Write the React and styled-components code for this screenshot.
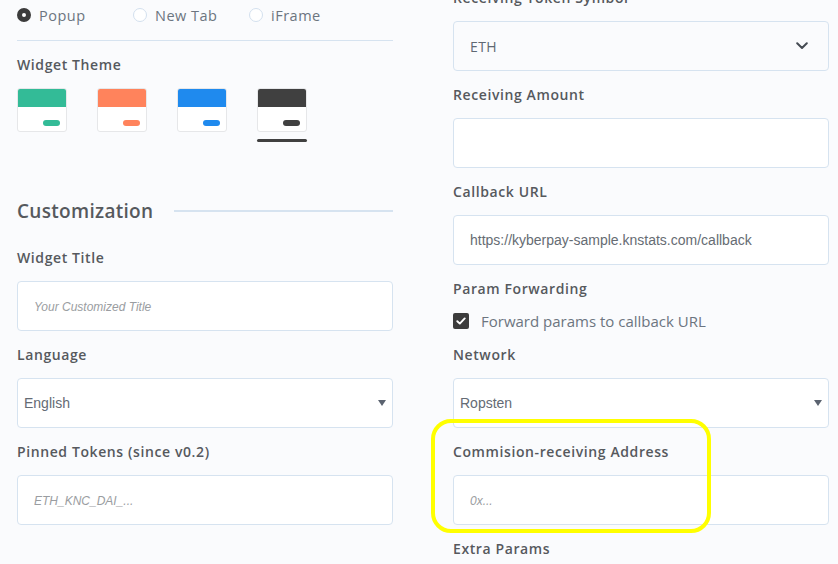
import React from "react";
import styled, { createGlobalStyle } from "styled-components";

const themes = [
  { key: "green", color: "#33bb97" },
  { key: "orange", color: "#ff835c" },
  { key: "blue", color: "#1f8aee" },
  { key: "dark", color: "#404040", selected: true },
];

const modes = [
  { label: "Popup", checked: true },
  { label: "New Tab" },
  { label: "iFrame" },
];

const App = () => (
  <>
    <GlobalStyle />
    <Page>
      <Columns>
        <Column>
          <RadioRow>
            {modes.map((m) => (
              <RadioItem key={m.label}>
                <RadioDot $checked={m.checked} />
                <RadioText>{m.label}</RadioText>
              </RadioItem>
            ))}
          </RadioRow>
          <Divider />

          <Label>Widget Theme</Label>
          <ThemeRow>
            {themes.map((t) => (
              <ThemeOption key={t.key}>
                <ThemeCard>
                  <ThemeHeader $color={t.color} />
                  <ThemeBody>
                    <ThemePill $color={t.color} />
                  </ThemeBody>
                </ThemeCard>
                {t.selected && <ThemeMark />}
              </ThemeOption>
            ))}
          </ThemeRow>

          <SectionHeading>
            <SectionTitle>Customization</SectionTitle>
            <SectionLine />
          </SectionHeading>

          <Field>
            <Label>Widget Title</Label>
            <Input placeholder="Your Customized Title" />
          </Field>

          <Field>
            <Label>Language</Label>
            <SelectBox>
              <NativeSelect defaultValue="en">
                <option value="en">English</option>
              </NativeSelect>
              <Caret />
            </SelectBox>
          </Field>

          <Field>
            <Label>Pinned Tokens (since v0.2)</Label>
            <Input placeholder="ETH_KNC_DAI_..." />
          </Field>
        </Column>

        <Column $shift>
          <Field>
            <Label>Receiving Token Symbol</Label>
            <TokenSelect>
              <TokenValue>ETH</TokenValue>
              <svg width="12" height="8" viewBox="0 0 12 8">
                <polyline
                  points="1.2,1.2 6,6 10.8,1.2"
                  fill="none"
                  stroke="#454b53"
                  strokeWidth="2"
                  strokeLinecap="round"
                  strokeLinejoin="round"
                />
              </svg>
            </TokenSelect>
          </Field>

          <Field>
            <Label>Receiving Amount</Label>
            <Input />
          </Field>

          <Field>
            <Label>Callback URL</Label>
            <Input defaultValue="https://kyberpay-sample.knstats.com/callback" />
          </Field>

          <Field $tight>
            <Label>Param Forwarding</Label>
            <CheckRow>
              <CheckBox>
                <svg width="10" height="8" viewBox="0 0 10 8">
                  <polyline
                    points="1.3,4.2 3.8,6.6 8.7,1.4"
                    fill="none"
                    stroke="#fff"
                    strokeWidth="1.9"
                    strokeLinecap="round"
                    strokeLinejoin="round"
                  />
                </svg>
              </CheckBox>
              <CheckText>Forward params to callback URL</CheckText>
            </CheckRow>
          </Field>

          <Field>
            <Label>Network</Label>
            <SelectBox>
              <NativeSelect defaultValue="ropsten">
                <option value="ropsten">Ropsten</option>
              </NativeSelect>
              <Caret />
            </SelectBox>
          </Field>

          <Field>
            <Label>Commision-receiving Address</Label>
            <Input placeholder="0x..." />
          </Field>

          <Field>
            <Label>Extra Params</Label>
          </Field>
        </Column>
      </Columns>
      <Highlight />
    </Page>
  </>
);

const Caret = () => (
  <CaretIcon width="8" height="6" viewBox="0 0 8 6">
    <polygon points="0,0 8,0 4,6" fill="#5b6370" />
  </CaretIcon>
);

const colors = {
  bg: "#fafbfd",
  ink: "#56595d",
  soft: "#6c7580",
  line: "#d6e3f0",
  field: "#ffffff",
};

const GlobalStyle = createGlobalStyle`
  body {
    margin: 0;
    background: ${colors.bg};
    font-family: "Open Sans", "Noto Sans", sans-serif;
  }
`;

const Page = styled.div`
  position: relative;
  height: 564px;
  overflow: hidden;
  background: ${colors.bg};
`;

const Columns = styled.div`
  display: grid;
  grid-template-columns: 376px 376px;
  column-gap: 60px;
  padding-left: 17px;
  align-items: start;
`;

const Column = styled.div`
  display: flex;
  flex-direction: column;
  padding-top: ${(p) => (p.$shift ? "0" : "7px")};
  margin-top: ${(p) => (p.$shift ? "-10px" : "0")};
`;

const RadioRow = styled.div`
  display: flex;
  align-items: center;
  height: 16px;
`;

const RadioItem = styled.label`
  display: flex;
  align-items: center;
  gap: 8px;
  width: 116px;
`;

const RadioDot = styled.span`
  box-sizing: border-box;
  width: 14px;
  height: 14px;
  border-radius: 50%;
  background: #fff;
  border: ${(p) => (p.$checked ? "5px solid #3c3c3c" : "1.5px solid #d3e0ee")};
`;

const RadioText = styled.span`
  font-size: 14.5px;
  letter-spacing: 0.5px;
  color: ${colors.soft};
`;

const Divider = styled.div`
  height: 1px;
  background: ${colors.line};
  margin: 17px 0 16px;
`;

const Label = styled.div`
  font-size: 14px;
  font-weight: 600;
  line-height: 16px;
  letter-spacing: 0.6px;
  color: ${colors.ink};
  margin-bottom: 15px;
  white-space: nowrap;
`;

const ThemeRow = styled.div`
  display: flex;
  gap: 30px;
  height: 54px;
`;

const ThemeOption = styled.div`
  display: flex;
  flex-direction: column;
  gap: 7px;
`;

const ThemeCard = styled.div`
  width: 50px;
  height: 44px;
  box-sizing: border-box;
  border: 1px solid #e6e7e9;
  border-radius: 3px;
  overflow: hidden;
  display: flex;
  flex-direction: column;
  background: #fff;
`;

const ThemeHeader = styled.div`
  height: 19px;
  margin: -1px -1px 0;
  background: ${(p) => p.$color};
`;

const ThemeBody = styled.div`
  flex: 1;
  display: flex;
  justify-content: flex-end;
  align-items: flex-end;
  padding: 0 6px 5px 0;
`;

const ThemePill = styled.div`
  width: 17px;
  height: 6px;
  border-radius: 3px;
  background: ${(p) => p.$color};
`;

const ThemeMark = styled.div`
  width: 50px;
  height: 3px;
  border-radius: 2px;
  background: #404040;
`;

const SectionHeading = styled.div`
  display: flex;
  align-items: center;
  gap: 21px;
  margin: 57px 0 27px;
  height: 24px;
`;

const SectionTitle = styled.h2`
  margin: 0;
  font-size: 19px;
  font-weight: 600;
  letter-spacing: 0.3px;
  color: ${colors.ink};
`;

const SectionLine = styled.div`
  flex: 1;
  height: 2px;
  background: ${colors.line};
`;

const Field = styled.div`
  display: flex;
  flex-direction: column;
  margin-bottom: ${(p) => (p.$tight ? "18px" : "16px")};
`;

const Input = styled.input`
  box-sizing: border-box;
  height: 50px;
  width: 100%;
  border: 1px solid ${colors.line};
  border-radius: 4px;
  background: ${colors.field};
  padding: 0 16px;
  font-family: "Liberation Sans", Arial, sans-serif;
  font-size: 14px;
  color: #666c73;
  outline: none;

  &::placeholder {
    font-style: italic;
    font-size: 12px;
    color: #9a9da1;
  }
`;

const SelectBox = styled.div`
  box-sizing: border-box;
  height: 50px;
  display: flex;
  align-items: center;
  border: 1px solid ${colors.line};
  border-radius: 4px;
  background: ${colors.field};
  padding-right: 6px;
`;

const NativeSelect = styled.select`
  flex: 1;
  appearance: none;
  border: none;
  background: transparent;
  height: 100%;
  padding: 0 6px;
  font-family: "Liberation Sans", Arial, sans-serif;
  font-size: 14px;
  color: #646b74;
  outline: none;
`;

const CaretIcon = styled.svg`
  flex: none;
`;

const TokenSelect = styled.div`
  box-sizing: border-box;
  height: 50px;
  display: flex;
  align-items: center;
  justify-content: space-between;
  border: 1px solid ${colors.line};
  border-radius: 4px;
  background: ${colors.bg};
  padding: 0 20px 0 16px;
`;

const TokenValue = styled.span`
  font-size: 14px;
  letter-spacing: 0.4px;
  color: #5f6873;
`;

const CheckRow = styled.label`
  display: flex;
  align-items: center;
  gap: 12px;
  height: 16px;
  margin-top: 1px;
`;

const CheckBox = styled.span`
  width: 16px;
  height: 16px;
  border-radius: 2px;
  background: #3c3c3c;
  display: flex;
  align-items: center;
  justify-content: center;
`;

const CheckText = styled.span`
  font-size: 15px;
  color: ${colors.soft};
`;

const Highlight = styled.div`
  position: absolute;
  left: 431px;
  top: 419px;
  width: 280px;
  height: 114px;
  box-sizing: border-box;
  border: 4px solid #ffff00;
  border-radius: 20px;
  pointer-events: none;
`;

export default App;
